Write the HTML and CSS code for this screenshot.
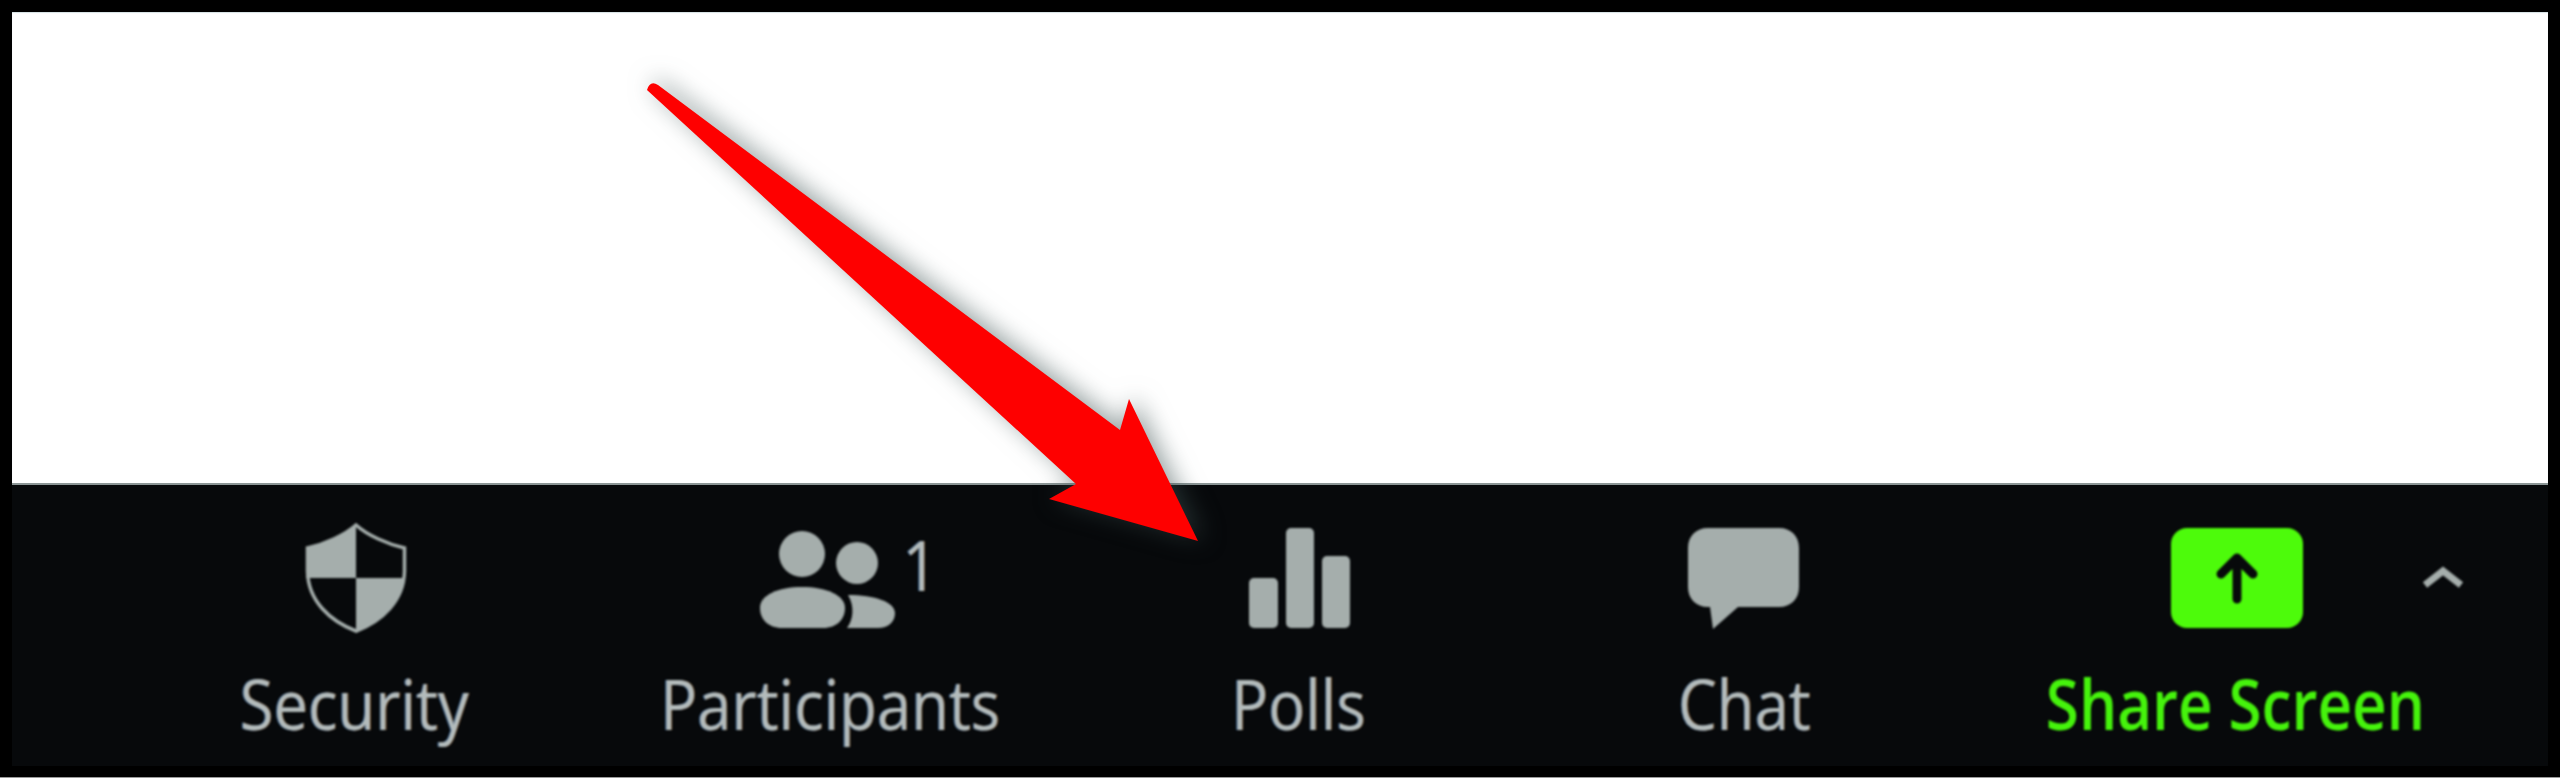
FILE: index.html
```html
<!DOCTYPE html>
<html lang="en">
<head>
<meta charset="utf-8">
<title>Polls toolbar</title>
<link rel="stylesheet" href="styles.css">
</head>
<body>
<main class="frame">
  <div class="canvas"></div>
  <nav class="toolbar">
    <div class="item">
      <svg class="icon" viewBox="298 522 112 112" width="112" height="112">
        <path class="outline" d="M356 524C345 534 325 543 307.500 547V570C308 600 330 620 356 630C382 620 404 600 404.500 570V547C387 543 367 534 356 524Z"/>
        <path class="fill" d="M356 523C345 533 325 542 306 546V577H356Z"/>
        <path class="fill" d="M356 577H405C403 600 382 621 356 632Z"/>
      </svg>
      <span class="label">Security</span>
    </div>
    <div class="item">
      <div class="icon-wrap">
        <svg class="icon" viewBox="750 522 160 112" width="160" height="112">
          <circle class="fill" cx="802" cy="553" r="23"/>
          <circle class="fill" cx="857" cy="562" r="21"/>
          <path class="fill" d="M782 627C768 627 760 618 760 607C760 594 778 586 802 586C826 586 845 594 845 607C845 618 837 627 823 627Z"/>
          <path class="fill" d="M847 627C853 619 855 606 848 594C875 594 895 601 895 612C895 621 888 627 878 627Z"/>
        </svg>
        <span class="count">1</span>
      </div>
      <span class="label">Participants</span>
    </div>
    <div class="item">
      <svg class="icon" viewBox="1242 522 112 112" width="112" height="112">
        <rect class="fill" x="1249" y="577" width="29" height="50" rx="5"/>
        <rect class="fill" x="1286" y="527" width="28" height="100" rx="5"/>
        <rect class="fill" x="1322" y="555" width="28" height="72" rx="5"/>
      </svg>
      <span class="label">Polls</span>
    </div>
    <div class="item">
      <svg class="icon" viewBox="1684 522 120 112" width="120" height="112">
        <path class="fill" d="M1708 527H1779C1791 527 1799 535 1799 547V586C1799 598 1791 606 1779 606H1738L1713 628L1710 606H1708C1696 606 1688 598 1688 586V547C1688 535 1696 527 1708 527Z"/>
      </svg>
      <span class="label">Chat</span>
    </div>
    <div class="item share">
      <svg class="icon" viewBox="2167 522 136 112" width="136" height="112">
        <rect class="green" x="2171" y="527" width="132" height="100" rx="16"/>
        <path class="arrow-up" d="M2237 598V557M2221 573L2237 557L2253 573"/>
      </svg>
      <span class="label">Share Screen</span>
      <svg class="caret" viewBox="0 0 42 22" width="42" height="22">
        <path d="M3 19L21 5L39 19"/>
      </svg>
    </div>
  </nav>
  <svg class="pointer" viewBox="0 0 2560 778" width="2560" height="778">
    <path d="M647 90Q650 80 658 85L1120 430L1129 399L1198 541L1049 499L1076 484Z"/>
  </svg>
</main>
</body>
</html>
```

FILE: styles.css
```css
html, body {
  margin: 0;
  background: #000;
}

.frame {
  position: relative;
  box-sizing: border-box;
  height: 778px;
  padding: 12px 12px 11px;
  display: flex;
  flex-direction: column;
  border-bottom: 1px solid #9a9a9a;
  overflow: hidden;
}

.canvas {
  height: 471px;
  flex: none;
  background: #fff;
  box-shadow: inset 0 1px 1px #d5e2e4;
}

.toolbar {
  flex: 1;
  box-sizing: border-box;
  background: #07090b;
  border-top: 2px solid #8b9595;
  padding: 38px 0 0 142px;
  display: grid;
  grid-template-columns: 400px 552px 384px 508px 474px;
  align-content: start;
}

.item {
  position: relative;
  display: flex;
  flex-direction: column;
  align-items: center;
  filter: blur(1px);
}

.icon-wrap {
  position: relative;
  height: 112px;
}

.icon {
  display: block;
}

.fill {
  fill: #a5aeac;
}

.outline {
  fill: none;
  stroke: #a5aeac;
  stroke-width: 3.5;
}

.green {
  fill: #4dfb0b;
}

.arrow-up {
  fill: none;
  stroke: #07090b;
  stroke-width: 9;
  stroke-linecap: round;
  stroke-linejoin: round;
}

.label,
.count {
  font-family: "Open Sans", "Noto Sans", sans-serif;
  font-size: 70px;
  font-weight: 500;
  line-height: 80px;
  color: #b3bbbb;
  white-space: nowrap;
  text-shadow: -1px 0 0 rgba(70, 150, 240, 0.55), 1px 0 0 rgba(220, 130, 40, 0.45);
}

.label {
  margin-top: 28px;
  transform: scaleX(0.88);
}

.count {
  position: absolute;
  left: 150px;
  top: 1px;
  transform: scaleX(0.88);
}

.share .label {
  color: #45f30c;
  font-weight: 600;
  text-shadow: none;
  transform: scaleX(0.86);
}

.caret {
  position: absolute;
  left: 424px;
  top: 43px;
}

.caret path {
  fill: none;
  stroke: #a5aeac;
  stroke-width: 7;
}

.pointer {
  position: absolute;
  left: 0;
  top: 0;
  filter: drop-shadow(5px -2px 12px rgba(60, 80, 80, 0.55)) blur(0.7px);
}

.pointer path {
  fill: #fe0000;
}
```
